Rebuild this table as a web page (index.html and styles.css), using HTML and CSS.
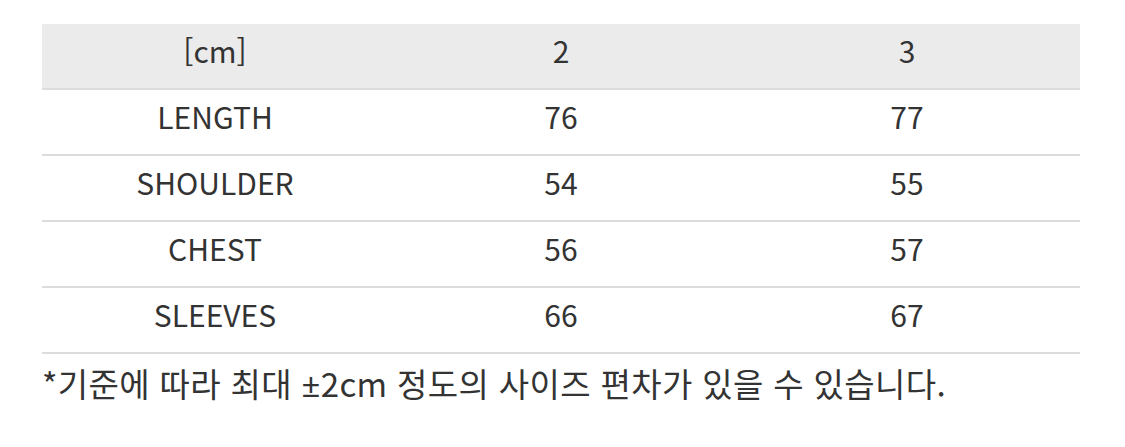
FILE: index.html
```html
<!DOCTYPE html>
<html lang="ko">
<head>
<meta charset="utf-8">
<link rel="stylesheet" href="styles.css">
</head>
<body>
<div class="wrap">
  <table class="size-table">
    <thead>
      <tr><th>[cm]</th><th>2</th><th>3</th></tr>
    </thead>
    <tbody>
      <tr><td>LENGTH</td><td>76</td><td>77</td></tr>
      <tr><td>SHOULDER</td><td>54</td><td>55</td></tr>
      <tr><td>CHEST</td><td>56</td><td>57</td></tr>
      <tr><td>SLEEVES</td><td>66</td><td>67</td></tr>
    </tbody>
  </table>
  <p class="note">*기준에 따라 최대 <span class="sym">±</span>2cm 정도의 사이즈 편차가 있을 수 있습니다.</p>
</div>
</body>
</html>
```
FILE: styles.css
```css
html, body {
  margin: 0;
  padding: 0;
  background: #ffffff;
}
body {
  font-family: "Noto Sans CJK KR", "Noto Sans", sans-serif;
  color: #333333;
}
.wrap {
  padding: 24px 45px 0 42px;
}
.size-table {
  width: 1038px;
  border-collapse: collapse;
  table-layout: fixed;
}
.size-table th,
.size-table td {
  width: 33.333%;
  text-align: center;
  font-weight: 400;
  font-size: 30px;
  line-height: 40px;
  padding: 0 0 12px 0;
  border-bottom: 2px solid #dcdcdc;
  box-sizing: border-box;
}
.size-table th {
  height: 65px;
  background: #ebebeb;
}
.size-table td {
  height: 66px;
}
.note {
  margin: 0;
  padding-top: 7px;
  font-size: 33px;
  line-height: 44px;
  letter-spacing: 0.35px;
  color: #333333;
}
.sym {
  font-family: "Noto Sans", sans-serif;
}
```
